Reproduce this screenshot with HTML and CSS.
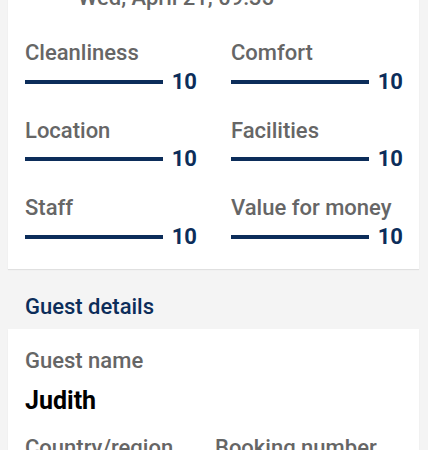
FILE: index.html
```html
<!DOCTYPE html>
<html>
<head>
<meta charset="utf-8">
<link rel="stylesheet" href="styles.css">
</head>
<body>
<div class="page">
  <section class="card scores">
    <div class="date">Wed, April 21, 09:35</div>
    <div class="grid">
      <div class="score"><div class="label">Cleanliness</div><div class="barrow"><div class="bar"></div><span class="num">10</span></div></div>
      <div class="score"><div class="label">Comfort</div><div class="barrow"><div class="bar"></div><span class="num">10</span></div></div>
      <div class="score"><div class="label">Location</div><div class="barrow"><div class="bar"></div><span class="num">10</span></div></div>
      <div class="score"><div class="label">Facilities</div><div class="barrow"><div class="bar"></div><span class="num">10</span></div></div>
      <div class="score"><div class="label">Staff</div><div class="barrow"><div class="bar"></div><span class="num">10</span></div></div>
      <div class="score"><div class="label">Value for money</div><div class="barrow"><div class="bar"></div><span class="num">10</span></div></div>
    </div>
  </section>
  <h2 class="heading">Guest details</h2>
  <section class="card guest">
    <div class="label">Guest name</div>
    <div class="name">Judith</div>
    <div class="pair">
      <div class="label">Country/region</div>
      <div class="label">Booking number</div>
    </div>
  </section>
</div>
</body>
</html>
```
FILE: styles.css
```css
html, body {
  margin: 0;
  padding: 0;
  background: #f4f4f4;
  font-family: Roboto, "Liberation Sans", sans-serif;
  overflow: hidden;
}
.page {
  margin-top: -16px;
  padding: 0 9px 0 8px;
}
.card {
  background: #fff;
  box-shadow: 0 1px 1px rgba(0,0,0,0.08);
  padding: 0 16px 0 17px;
}
.scores {
  padding-bottom: 18px;
}
.date {
  font-size: 22px;
  line-height: 28px;
  font-weight: 500;
  color: #666;
  padding-left: 53px;
}
.grid {
  margin-top: 27px;
  display: grid;
  grid-template-columns: 1fr 1fr;
  column-gap: 34px;
  row-gap: 20.5px;
}
.label {
  font-size: 22px;
  line-height: 28px;
  font-weight: 500;
  color: #666;
}
.barrow {
  display: flex;
  align-items: center;
  gap: 9px;
  height: 29px;
}
.bar {
  flex: 1;
  height: 4px;
  background: #0c2d5a;
}
.num {
  font-size: 22px;
  line-height: 28px;
  font-weight: 700;
  color: #0c2d5a;
}
.heading {
  margin: 24px 0 8px;
  padding-left: 17px;
  font-size: 22px;
  line-height: 28px;
  font-weight: 500;
  color: #0c2d5a;
}
.guest {
  padding-top: 18px;
  padding-bottom: 20px;
}
.name {
  margin-top: 10px;
  font-size: 25px;
  line-height: 32px;
  font-weight: 700;
  color: #000;
}
.pair {
  margin-top: 17px;
  display: grid;
  grid-template-columns: 190px 1fr;
}
```
